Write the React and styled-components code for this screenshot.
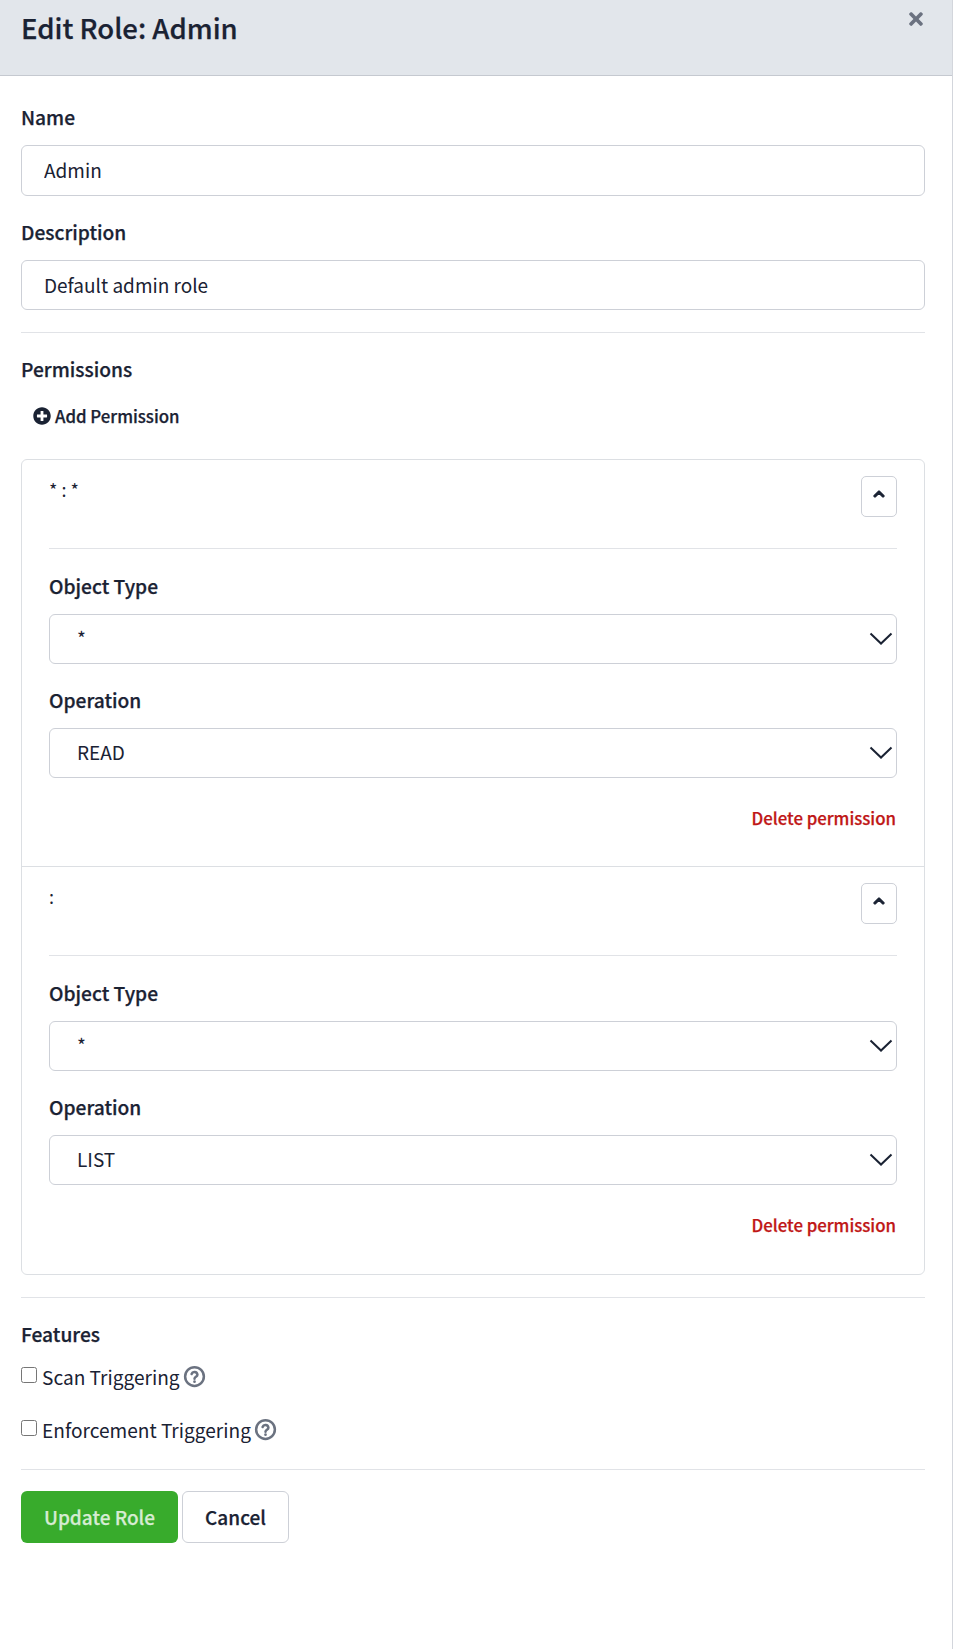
import React from "react";
import styled, { createGlobalStyle, css } from "styled-components";
import { FaPlusCircle, FaChevronUp, FaTimes } from "react-icons/fa";

const permissions = [
  { id: 1, title: "* : *", objectType: "*", operation: "READ" },
  { id: 2, title: ":", objectType: "*", operation: "LIST" },
];

const features = ["Scan Triggering", "Enforcement Triggering"];

const HelpIcon = () => (
  <svg width="25" height="25" viewBox="0 0 24 24" fill="none" stroke="#6b7280" strokeWidth="2.4">
    <circle cx="12" cy="12" r="9" />
    <path d="M9.2 9.6a2.9 2.9 0 0 1 5.6 .6c0 2-2.8 2.2-2.8 4" strokeLinecap="round" />
    <circle cx="12" cy="17" r="1.3" fill="#6b7280" stroke="none" />
  </svg>
);

const Chevron = () => (
  <SelectArrow width="24" height="14" viewBox="0 0 24 14" fill="none" stroke="#1a2233" strokeWidth="2">
    <path d="M1.5 1.5 12 11.5 22.5 1.5" />
  </SelectArrow>
);

const App = () => {
  return (
    <Page>
      <GlobalStyle />
      <Header>
        <Title>Edit Role: Admin</Title>
        <CloseButton aria-label="Close">
          <FaTimes />
        </CloseButton>
      </Header>
      <Body>
        <Field>
          <Label>Name</Label>
          <TextInput defaultValue="Admin" />
        </Field>
        <Field>
          <Label>Description</Label>
          <TextInput defaultValue="Default admin role" />
        </Field>
        <Divider />
        <SectionLabel>Permissions</SectionLabel>
        <AddButton>
          <FaPlusCircle />
          Add Permission
        </AddButton>
        <PermissionCard>
          {permissions.map((permission) => (
            <PermissionItem key={permission.id}>
              <PermissionHead>
                <PermissionTitle>{permission.title}</PermissionTitle>
                <ToggleButton aria-label="Collapse">
                  <FaChevronUp />
                </ToggleButton>
              </PermissionHead>
              <InnerDivider />
              <Field>
                <Label>Object Type</Label>
                <SelectWrap>
                  <Select defaultValue={permission.objectType}>
                    <option>*</option>
                  </Select>
                  <Chevron />
                </SelectWrap>
              </Field>
              <Field>
                <Label>Operation</Label>
                <SelectWrap>
                  <Select defaultValue={permission.operation}>
                    <option>READ</option>
                    <option>LIST</option>
                  </Select>
                  <Chevron />
                </SelectWrap>
              </Field>
              <DeleteRow>
                <DeleteLink>Delete permission</DeleteLink>
              </DeleteRow>
            </PermissionItem>
          ))}
        </PermissionCard>
        <Divider />
        <SectionLabel>Features</SectionLabel>
        <FeatureList>
          {features.map((feature) => (
            <FeatureRow key={feature}>
              <Checkbox type="checkbox" />
              {feature}
              <HelpIcon />
            </FeatureRow>
          ))}
        </FeatureList>
        <FooterDivider />
        <Actions>
          <PrimaryButton>Update Role</PrimaryButton>
          <SecondaryButton>Cancel</SecondaryButton>
        </Actions>
      </Body>
    </Page>
  );
};

export default App;

// no semibold cut of the font is installed, so thicken the medium one a little
const semibold = css`
  font-weight: 500;
  -webkit-text-stroke: 0.25px currentColor;
`;

const GlobalStyle = createGlobalStyle`
  * {
    box-sizing: border-box;
  }

  body {
    margin: 0;
    background: #fff;
    color: #1a2233;
    font-family: "Noto Sans CJK JP", "Noto Sans", sans-serif;
  }
`;

const Page = styled.div`
  width: 953px;
  height: 1649px;
  border-right: 1px solid #d3d6dc;
`;

const Header = styled.header`
  display: flex;
  justify-content: space-between;
  align-items: flex-start;
  height: 76px;
  padding: 8px 28px 0 21px;
  background: #e2e6eb;
  border-bottom: 1px solid #c5c9d0;
`;

const Title = styled.h1`
  margin: 0;
  font-size: 27.5px;
  line-height: 38px;
  ${semibold}
`;

const CloseButton = styled.button`
  display: block;
  margin: 1px -2px 0 0;
  padding: 0;
  border: none;
  background: none;
  color: #6b7280;
  font-size: 20px;
  line-height: 20px;
`;

const Body = styled.div`
  padding: 27px 27px 0 21px;
`;

const Field = styled.div`
  margin-bottom: 22px;
`;

const Label = styled.label`
  display: block;
  margin-bottom: 14px;
  font-size: 19.2px;
  line-height: 28px;
  ${semibold}
`;

const TextInput = styled.input`
  display: block;
  width: 100%;
  height: 50.5px;
  padding: 0 22px 1px;
  border: 1px solid #cdd0d7;
  border-radius: 6px;
  background: #fff;
  color: #1a2233;
  font: inherit;
  font-size: 19px;
`;

const Divider = styled.hr`
  margin: 22px 0 22px;
  border: none;
  border-top: 1px solid #e1e3e7;
`;

const FooterDivider = styled(Divider)`
  margin: 25px 0 21px;
`;

const SectionLabel = styled.div`
  font-size: 19.2px;
  line-height: 28px;
  ${semibold}
`;

const AddButton = styled.button`
  display: flex;
  align-items: center;
  gap: 4px;
  margin: 21px 0 30.5px 12px;
  padding: 0;
  border: none;
  background: none;
  color: #1a2233;
  font: inherit;
  font-size: 16.8px;
  line-height: 24px;
  ${semibold}

  svg {
    font-size: 18px;
  }
`;

const PermissionCard = styled.div`
  border: 1px solid #dcdfe3;
  border-radius: 6px;
`;

const PermissionItem = styled.div`
  padding: 16px 27px 36px;

  & + & {
    border-top: 1px solid #dcdfe3;
    padding-bottom: 37px;
  }
`;

const PermissionHead = styled.div`
  display: flex;
  justify-content: space-between;
  align-items: flex-start;
  height: 41px;
`;

const PermissionTitle = styled.div`
  margin-top: 1px;
  font-size: 18px;
  line-height: 24px;
`;

const ToggleButton = styled.button`
  display: flex;
  align-items: center;
  justify-content: center;
  width: 36px;
  height: 41px;
  padding: 0 0 5px;
  border: 1px solid #cdd0d7;
  border-radius: 5px;
  background: #fff;
  color: #1a2233;
  font-size: 12px;

  svg {
    stroke: currentColor;
    stroke-width: 50px;
  }
`;

const InnerDivider = styled.hr`
  margin: 31px 0 23px;
  border: none;
  border-top: 1px solid #e1e3e7;
`;

const SelectWrap = styled.div`
  position: relative;
`;

const Select = styled.select`
  display: block;
  width: 100%;
  height: 50px;
  padding: 0 27px 2px;
  border: 1px solid #cdd0d7;
  border-radius: 6px;
  background: #fff;
  color: #1a2233;
  font: inherit;
  font-size: 19px;
  appearance: none;
`;

const SelectArrow = styled.svg`
  position: absolute;
  top: 18px;
  right: 4px;
  pointer-events: none;
`;

const DeleteRow = styled.div`
  display: flex;
  justify-content: flex-end;
  margin-top: 28px;
  padding-right: 1px;
`;

const DeleteLink = styled.a`
  color: #c01616;
  font-size: 16.8px;
  line-height: 24px;
  ${semibold}
`;

const FeatureList = styled.div`
  display: flex;
  flex-direction: column;
  gap: 25px;
  margin-top: 15px;
`;

const FeatureRow = styled.label`
  display: flex;
  align-items: center;
  gap: 5px;
  font-size: 19.1px;
  line-height: 28px;

  svg {
    margin-left: -3px;
  }
`;

const Checkbox = styled.input`
  width: 16px;
  height: 16px;
  margin: -3px 0 0;
`;

const Actions = styled.div`
  display: flex;
  gap: 4px;
`;

const PrimaryButton = styled.button`
  width: 157px;
  height: 52px;
  border: none;
  border-radius: 6px;
  background: #38ab2c;
  color: #d6ecd3;
  font: inherit;
  font-size: 19px;
  ${semibold}
`;

const SecondaryButton = styled.button`
  width: 107px;
  height: 52px;
  border: 1px solid #cdd0d7;
  border-radius: 6px;
  background: #fff;
  color: #1a2233;
  font: inherit;
  font-size: 19px;
  ${semibold}
`;
